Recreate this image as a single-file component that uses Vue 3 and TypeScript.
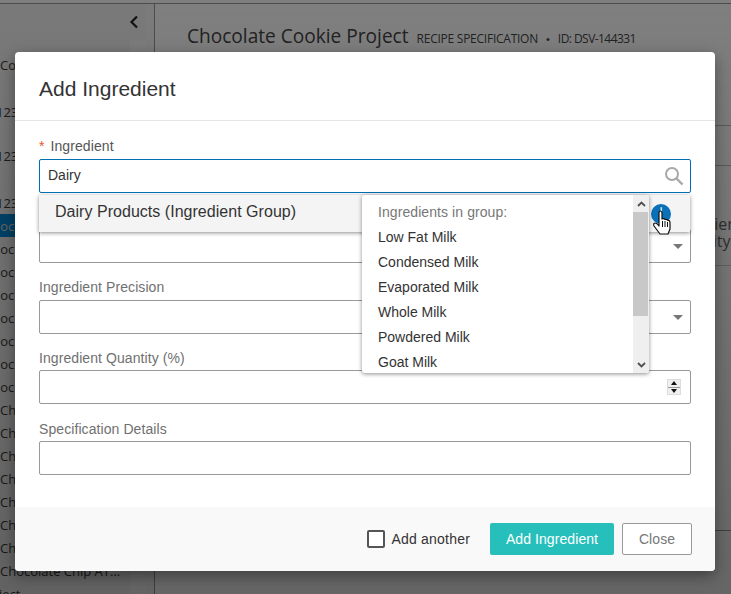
<script setup lang="ts">
const sideTop = [
  { text: 'Cookie', cls: 'gap-a' },
  { text: '1234', cls: 'gap-b' },
  { text: '1234', cls: 'gap-c' },
  { text: '12345', cls: 'gap-d' },
]
const chocolate: { text: string; cut: boolean; sel?: boolean }[] = [
  { text: 'Choc', cut: true, sel: true },
  ...Array.from({ length: 7 }, () => ({ text: 'Choc', cut: true })),
  ...Array.from({ length: 7 }, () => ({ text: 'Ch', cut: false })),
]
const milks = ['Low Fat Milk', 'Condensed Milk', 'Evaporated Milk', 'Whole Milk', 'Powdered Milk', 'Goat Milk']
</script>

<template>
  <div class="page">
    <div class="topline"></div>
    <div class="shell">
      <aside class="side">
        <div class="collapse">
          <svg width="10" height="14" viewBox="0 0 10 14"><path d="M8 1.5 2.5 7 8 12.500" fill="none" stroke="#222" stroke-width="2.200" /></svg>
        </div>
        <div class="sidelist">
          <div v-for="(r, i) in sideTop" :key="i" class="srow" :class="r.cls">{{ r.text }}</div>
          <div v-for="(c, i) in chocolate" :key="'c' + i" class="srow choc" :class="{ cut: c.cut, sel: c.sel }">{{ c.text }}</div>
          <div class="srow choc last">Chocolate Chip AT...</div>
          <div class="srow choc project">Project</div>
        </div>
      </aside>
      <div class="strip"></div>
      <main class="main">
        <div class="heading">
          <span class="title">Chocolate Cookie Project</span>
          <span class="meta">RECIPE SPECIFICATION</span>
          <span class="dot">•</span>
          <span class="meta idtext">ID: DSV-144331</span>
        </div>
        <div class="band one"></div>
        <div class="band two">
          <p>Ingredient</p>
          <p>Quantity</p>
        </div>
        <div class="band three"></div>
      </main>
    </div>

    <div class="overlay"></div>

    <section class="modal">
      <header class="mhead">Add Ingredient</header>
      <div class="mbody">
        <div class="field">
          <label class="lab strong"><span class="req">*</span>Ingredient</label>
          <div class="box focus">
            <input class="inp" value="Dairy" readonly />
            <svg class="search" width="20" height="20" viewBox="0 0 20 20"><circle cx="8" cy="8" r="6" fill="none" stroke="#a8a8a8" stroke-width="2" /><path d="M12.500 12.500 18.500 18.500" stroke="#a8a8a8" stroke-width="2.400" /></svg>
          </div>
        </div>
        <div class="field">
          <label class="lab"></label>
          <div class="box"><span class="grow"></span><span class="caret"></span></div>
        </div>
        <div class="field">
          <label class="lab">Ingredient Precision</label>
          <div class="box"><span class="grow"></span><span class="caret"></span></div>
        </div>
        <div class="field">
          <label class="lab tight">Ingredient Quantity (%)</label>
          <div class="box">
            <span class="grow"></span>
            <span class="spin">
              <span class="spinbtn"><i class="up"></i></span>
              <span class="spinbtn"><i class="down"></i></span>
            </span>
          </div>
        </div>
        <div class="field">
          <label class="lab tight">Specification Details</label>
          <div class="box"></div>
        </div>
      </div>
      <footer class="mfoot">
        <label class="check"><span class="cbox"></span>Add another</label>
        <button class="btn primary">Add Ingredient</button>
        <button class="btn ghost">Close</button>
      </footer>

      <div class="suggest">
        <span class="sugtext">Dairy Products (Ingredient Group)</span>
        <span class="info">i</span>
      </div>

      <div class="pop">
        <div class="poplist">
          <div class="pophead">Ingredients in group:</div>
          <div v-for="m in milks" :key="m" class="popitem">{{ m }}</div>
        </div>
        <div class="sbar">
          <div class="sbtn">
            <svg width="9" height="6" viewBox="0 0 9 6"><path d="M1 5 4.500 1.500 8 5" fill="none" stroke="#505050" stroke-width="1.800" /></svg>
          </div>
          <div class="thumb"></div>
          <div class="sgap"></div>
          <div class="sbtn">
            <svg width="9" height="6" viewBox="0 0 9 6"><path d="M1 1 4.500 4.500 8 1" fill="none" stroke="#505050" stroke-width="1.800" /></svg>
          </div>
        </div>
      </div>

      <svg class="hand" width="20" height="26" viewBox="0 0 20 26">
        <path d="M7 3Q7 1 8.500 1 10 1 10 3V9Q12 8 13 9.500 15 9 16 10.500 18 10 18 13V19L16 24H8L2 16Q1 13 3 13 5 13 7 16Z" fill="#fff" stroke="#111" stroke-width="1.200" stroke-linejoin="round" />
        <path d="M10.500 11V17M13 11V17M15.500 12V17" stroke="#111" stroke-width="1" fill="none" />
      </svg>
    </section>
  </div>
</template>

<style>
html, body { margin: 0; padding: 0; }
</style>

<style scoped>
.page {
  position: relative;
  width: 731px;
  height: 594px;
  overflow: hidden;
  background: #fff;
  font-family: "Liberation Sans", Arial, sans-serif;
  color: #333;
}
.topline { height: 3px; background: #fff; border-bottom: 1px solid #999; }
.shell { display: flex; height: 590px; }
.side {
  width: 146px;
  flex: none;
  background: #f4f4f4;
  font-family: "Open Sans", sans-serif;
  font-size: 13px;
  overflow: hidden;
  color: #3a3a3a;
}
.collapse { height: 36px; display: flex; align-items: center; justify-content: flex-end; padding: 0 7px 0 0; }
.sidelist { height: 554px; background: linear-gradient(90deg, #f4f4f4 0, #f4f4f4 130px, #fbfbfb 130px); overflow: hidden; }
.srow { height: 23px; line-height: 23px; white-space: nowrap; width: 131px; }
.choc { line-height: 25px; }
.gap-a { margin-top: 14px; }
.gap-b { margin-top: 24px; }
.gap-c { margin-top: 21px; }
.gap-d { margin-top: 24px; margin-left: -4px; margin-bottom: -1px; }
.gap-b, .gap-c { margin-left: -4px; }
.cut { margin-left: -16px; width: 147px; }
.sel { background: #008cdc; color: #d8d8d8; margin-left: 0; text-indent: -16px; width: 130px; }
.project { margin-left: -22px; }
.strip { width: 8px; flex: none; background: #f8f8f8; border-right: 1px solid #999; }
.main { flex: 1; min-width: 0; }
.heading {
  display: flex;
  align-items: baseline;
  padding: 19px 0 0 32px;
  height: 121px;
  box-sizing: border-box;
  white-space: nowrap;
}
.title { font-family: "Open Sans", sans-serif; font-size: 19.100px; color: #444; }
.meta { font-family: "Open Sans", sans-serif; font-size: 12px; letter-spacing: -0.25px; color: #444; margin-left: 8px; }
.idtext { letter-spacing: -0.55px; }
.dot { margin-left: 8px; margin-right: 0; font-size: 11px; color: #444; }
.band { border-top: 1px solid #bbb; }
.one { height: 39px; }
.two { height: 99px; padding-left: 511px; font-family: "Open Sans", sans-serif; font-size: 16px; color: #666; }
.two p { margin: 0; line-height: 17px; position: relative; top: 50px; }
.three { border-top-color: #ccc; height: 264px; border-bottom: 1px solid #999; }

.overlay {
  position: absolute;
  inset: 0;
  background: linear-gradient(rgba(0, 0, 0, 0.5), rgba(0, 0, 0, 0.6));
}

.modal {
  position: absolute;
  left: 15px;
  top: 52px;
  width: 700px;
  height: 519px;
  background: #fff;
  border-radius: 4px;
  box-shadow: 0 5px 15px rgba(0, 0, 0, 0.4);
  display: flex;
  flex-direction: column;
}
.mhead {
  height: 68px;
  line-height: 73px;
  padding-left: 24px;
  font-size: 21px;
  color: #333;
  border-bottom: 1px solid #e5e5e5;
  flex: none;
}
.mbody { flex: 1; padding: 18px 24px 0; }
.field { margin-bottom: 16px; }
.field:nth-child(even) { margin-bottom: 17px; }
.lab { display: block; height: 20px; line-height: 15px; font-size: 14px; color: #707070; letter-spacing: 0.08px; }
.tight { height: 19px; padding-top: 1px; }
.strong { color: #555; }
.req { color: #e8532b; margin-right: 6px; }
.box {
  box-sizing: border-box;
  height: 34px;
  border: 1px solid #999;
  border-radius: 2px;
  display: flex;
  align-items: center;
  background: #fff;
}
.focus { border-color: #0070b5; }
.inp {
  flex: 1;
  min-width: 0;
  border: 0;
  outline: 0;
  padding: 0 0 2px 8px;
  font: 14px "Liberation Sans", Arial, sans-serif;
  color: #333;
  background: transparent;
}
.search { margin-right: 6px; }
.grow { flex: 1; }
.caret { width: 0; height: 0; border-left: 5px solid transparent; border-right: 5px solid transparent; border-top: 5px solid #777; margin-right: 7px; }
.spin { width: 14px; height: 16px; display: flex; flex-direction: column; background: #dcdcdc; margin-right: 9px; padding: 1px; box-sizing: border-box; }
.spinbtn { flex: 1; display: flex; align-items: center; justify-content: center; background: #f0f0f0; }
.spinbtn + .spinbtn { border-top: 1px solid #999; }
.up { width: 0; height: 0; border: 3px solid transparent; border-top: 0; border-bottom: 4px solid #111; }
.down { width: 0; height: 0; border: 3px solid transparent; border-bottom: 0; border-top: 4px solid #111; }

.mfoot {
  height: 64px;
  flex: none;
  background: #f9f9f9;
  border-radius: 0 0 4px 4px;
  display: flex;
  align-items: center;
  justify-content: flex-end;
  padding: 0 23px 0 0;
}
.check { display: flex; align-items: center; font-size: 14px; color: #333; margin-right: 20px; letter-spacing: 0.2px; }
.cbox { width: 14px; height: 14px; border: 2px solid #555; border-radius: 2px; margin-right: 7px; background: #fff; }
.btn { height: 32px; font: 14px "Liberation Sans", Arial, sans-serif; letter-spacing: 0.08px; border-radius: 2px; cursor: pointer; box-sizing: border-box; }
.primary { width: 124px; background: #27bfbc; color: #fff; border: 0; margin-right: 8px; }
.ghost { width: 70px; background: #fff; color: #777; border: 1px solid #999; }

.suggest {
  position: absolute;
  left: 24px;
  top: 143px;
  width: 651px;
  height: 37px;
  box-sizing: border-box;
  background: #f4f4f4;
  box-shadow: 0 1px 4px rgba(0, 0, 0, 0.45);
  display: flex;
  align-items: center;
  justify-content: space-between;
  padding: 0 19px 0 16px;
  font-size: 16px;
  color: #333;
}
.sugtext { padding-bottom: 3px; letter-spacing: 0.03px; }
.info {
  width: 20px;
  height: 20px;
  border-radius: 50%;
  background: #0a70b8;
  color: #fff;
  text-align: center;
  font-size: 8px;
  line-height: 12px;
  font-weight: 700;
  overflow: hidden;
}
.pop {
  position: absolute;
  left: 347px;
  top: 143px;
  width: 287px;
  height: 178px;
  background: #fff;
  border-radius: 3px;
  box-shadow: 0 1px 4px rgba(0, 0, 0, 0.45);
  display: flex;
  overflow: hidden;
}
.poplist { flex: 1; padding: 4.500px 0 0 16px; font-size: 14px; color: #333; overflow: hidden; }
.pophead, .popitem { height: 25px; line-height: 25px; white-space: nowrap; }
.pophead { color: #777; letter-spacing: 0.08px; }
.sbar { width: 16px; flex: none; background: #efefef; display: flex; flex-direction: column; }
.sbtn { height: 17px; display: flex; align-items: center; justify-content: center; flex: none; }
.thumb { height: 104px; background: #c8c8c8; margin-right: 1px; flex: none; }
.sgap { flex: 1; }
.hand { position: absolute; left: 637px; top: 158px; }
</style>
